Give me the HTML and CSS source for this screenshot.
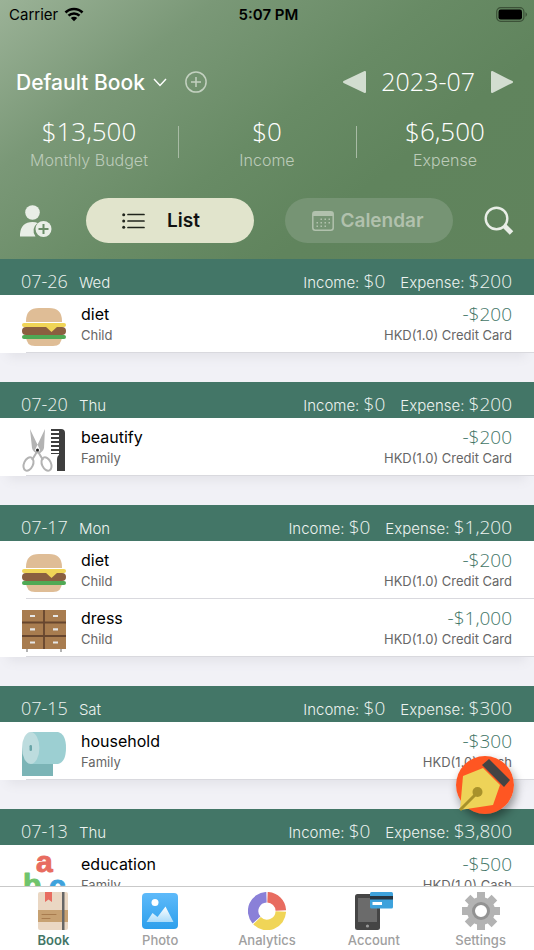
FILE: index.html
```html
<!DOCTYPE html>
<html lang="en">
<head>
  <meta charset="UTF-8">
  <meta name="viewport" content="width=device-width, initial-scale=1.0">
  <title>Default Book</title>
  <link rel="stylesheet" href="styles.css">
</head>
<body>

<!-- SHARED ICONS -->
<svg class="defs" aria-hidden="true">
  <symbol id="burger" viewBox="0 0 44 44">
    <path d="M4 17V16Q4 3 17 3h10q13 0 13 13v1zM4 31h36q0 10-9 10H13q-9 0-9-10z" fill="#dfbd96"/>
    <rect x="0" y="22" width="44" height="8" rx="4" fill="#8a5f40"/>
    <rect x="0" y="18" width="44" height="4" rx="2" fill="#f0d557"/>
    <path d="M23 21h13l-6.500 6z" fill="#f0d557"/>
    <rect x="0" y="30" width="44" height="4" rx="2" fill="#4fa954"/>
  </symbol>
</svg>

<header class="top">
  <div class="status">
    <span class="carrier">Carrier
      <svg width="20" height="15" viewBox="0 0 20 15"><path d="M1.500 5.500a12 12 0 0 1 17 0M4.500 8.700a7.800 7.800 0 0 1 11 0" fill="none" stroke="#000" stroke-width="2.600"/><path d="M6.800 11a4.600 4.600 0 0 1 6.400 0L10 14.300z"/></svg>
    </span>
    <time>5:07 PM</time>
    <svg class="battery" width="32" height="15" viewBox="0 0 32 15"><rect x=".7" y=".7" width="27.200" height="13.600" rx="4" fill="none" stroke="#3c5238" stroke-width="1.200"/><rect x="2.500" y="2.500" width="23.500" height="10" rx="2.200"/><path d="M29.500 5v5q3-2.500 0-5z" fill="#3c5238"/></svg>
  </div>

  <div class="book-bar">
    <button class="book">Default Book
      <svg width="14" height="9" viewBox="0 0 14 9"><path d="M1 1l6 6.500L13 1" fill="none" stroke="#fff" stroke-width="1.400"/></svg>
    </button>
    <button class="add" aria-label="Add book">
      <svg width="22" height="22" viewBox="0 0 22 22"><g fill="none" stroke="#c3d1c0" stroke-width="1.500"><circle cx="11" cy="11" r="10.100"/><path d="M11 6v10M6 11h10"/></g></svg>
    </button>
    <div class="month">
      <button aria-label="Previous month"><svg width="24" height="24" viewBox="0 0 24 24"><path d="M23 2v20L2 12z" fill="#d2ddd0" stroke="#d2ddd0" stroke-width="2" stroke-linejoin="round"/></svg></button>
      <span>2023-07</span>
      <button aria-label="Next month"><svg width="24" height="24" viewBox="0 0 24 24"><path d="M2 2v20l20-10z" fill="#d2ddd0" stroke="#d2ddd0" stroke-width="2" stroke-linejoin="round"/></svg></button>
    </div>
  </div>

  <div class="stats">
    <div class="stat"><b>$13,500</b><span>Monthly Budget</span></div>
    <div class="stat"><b>$0</b><span>Income</span></div>
    <div class="stat"><b>$6,500</b><span>Expense</span></div>
  </div>

  <div class="actions">
    <button aria-label="Add member">
      <svg width="32" height="34" viewBox="0 0 32 34"><g fill="#e9eee7"><circle cx="12.500" cy="8.500" r="7.300"/><path d="M0 32.500V30q1-12 12.500-12 3.500 0 5 1-7 6-2 13.500z"/><circle cx="23.500" cy="25" r="8"/></g><path d="M23.500 20v10M18.500 25h10" stroke="#6b8d68" stroke-width="2"/></svg>
    </button>
    <button class="pill on">
      <svg width="23" height="16" viewBox="0 0 23 16"><path d="M6 1.500h16M6 8h16M6 14.500h16" stroke="#20241c" stroke-width="1.700" stroke-linecap="round"/><g fill="#20241c"><circle cx="1.700" cy="1.700" r="1.500"/><circle cx="1.700" cy="8" r="1.500"/><circle cx="1.700" cy="14.300" r="1.500"/></g></svg>
      List
    </button>
    <button class="pill">
      <svg width="22" height="20" viewBox="0 0 22 20"><rect x=".8" y=".8" width="20.400" height="18.400" rx="2.500" fill="none" stroke="#b1c1ad" stroke-width="1.500"/><path d="M1 1h20v4H1z" fill="#b1c1ad"/><path d="M8.500 8.200h10M4.500 11.700h14M4.500 15.200h10" stroke="#b1c1ad" stroke-width="1.500" stroke-dasharray="1.500 2.500"/></svg>
      Calendar
    </button>
    <button aria-label="Search">
      <svg width="30" height="30" viewBox="0 0 30 30"><circle cx="12.500" cy="12.500" r="10.800" fill="none" stroke="#e9eee7" stroke-width="2.400"/><path d="M20 19.500l7.500 7.500" stroke="#e9eee7" stroke-width="5"/></svg>
    </button>
  </div>
</header>

<main class="list">
  <section class="day">
    <h2><span class="date">07-26</span><span>Wed</span><span class="sum">Income: <b>$0</b></span><span>Expense: <b>$200</b></span></h2>
    <div class="item">
      <svg class="pic"><use href="#burger"/></svg>
      <div class="name">diet<small>Child</small></div>
      <div class="amount">-$200<small>HKD(1.0) Credit Card</small></div>
    </div>
  </section>

  <section class="day">
    <h2><span class="date">07-20</span><span>Thu</span><span class="sum">Income: <b>$0</b></span><span>Expense: <b>$200</b></span></h2>
    <div class="item">
      <svg class="pic" viewBox="0 0 44 44">
        <path d="M8 1l10 21-2 4q-5-2-6-6zM23 1L13 22l3 4q5-2 6-6z" fill="#b3b3b3"/>
        <g fill="none" stroke="#b3b3b3" stroke-width="2"><path d="M16 22l-6 10M15 22l6 10"/><ellipse cx="6.500" cy="36" rx="4.500" ry="7" transform="rotate(25 6.500 36)"/><ellipse cx="24.500" cy="36" rx="4.500" ry="7" transform="rotate(-25 24.500 36)"/></g>
        <circle cx="15.500" cy="22" r="1.500" fill="#222"/>
        <path d="M29 1h10q4 0 4 4v38h-8V32q0-4 2-5v-1h-8z" fill="#3e3e3e"/>
        <path d="M28 4h9M28 8h9M28 12h9M28 16h9M28 20h9M28 24h9" stroke="#fff" stroke-width="2"/>
      </svg>
      <div class="name">beautify<small>Family</small></div>
      <div class="amount">-$200<small>HKD(1.0) Credit Card</small></div>
    </div>
  </section>

  <section class="day">
    <h2><span class="date">07-17</span><span>Mon</span><span class="sum">Income: <b>$0</b></span><span>Expense: <b>$1,200</b></span></h2>
    <div class="item">
      <svg class="pic"><use href="#burger"/></svg>
      <div class="name">diet<small>Child</small></div>
      <div class="amount">-$200<small>HKD(1.0) Credit Card</small></div>
    </div>
    <div class="item">
      <svg class="pic" viewBox="0 0 44 44">
        <path d="M4 39h2v4H4zM38 39h2v4h-2z" fill="#b3b3b3"/>
        <path d="M0 1h44v39H0z" fill="#a87c4f"/>
        <path d="M0 13.500h44M0 27h44M22 1v39" stroke="#67462f" stroke-width="1.800"/>
        <path d="M8 7h5M31 7h5M8 20.300h5M31 20.300h5M8 33.500h5M31 33.500h5" stroke="#e6e6e6" stroke-width="2.200"/>
      </svg>
      <div class="name">dress<small>Child</small></div>
      <div class="amount">-$1,000<small>HKD(1.0) Credit Card</small></div>
    </div>
  </section>

  <section class="day">
    <h2><span class="date">07-15</span><span>Sat</span><span class="sum">Income: <b>$0</b></span><span>Expense: <b>$300</b></span></h2>
    <div class="item">
      <svg class="pic" viewBox="0 0 44 44">
        <path d="M0 16h31v28H0z" fill="#7bb4b6"/>
        <path d="M9 0h27q8 2 8 16t-8 16H9z" fill="#9ccfd2"/>
        <ellipse cx="8.700" cy="16" rx="8.700" ry="16" fill="#bddcde"/>
        <rect x="7.500" y="13" width="2.500" height="6" rx="1.200" fill="#6aa5a8"/>
      </svg>
      <div class="name">household<small>Family</small></div>
      <div class="amount">-$300<small>HKD(1.0) Cash</small></div>
    </div>
  </section>

  <section class="day">
    <h2><span class="date">07-13</span><span>Thu</span><span class="sum">Income: <b>$0</b></span><span>Expense: <b>$3,800</b></span></h2>
    <div class="item">
      <svg class="pic abc" viewBox="0 0 44 44">
        <text x="14" y="17" fill="#e86c60" stroke="#e86c60">a</text>
        <text x="1" y="40" fill="#70c46c" stroke="#70c46c">b</text>
        <text x="27" y="41" fill="#3ea2dc" stroke="#3ea2dc">c</text>
      </svg>
      <div class="name">education<small>Family</small></div>
      <div class="amount">-$500<small>HKD(1.0) Cash</small></div>
    </div>
  </section>
</main>

<button class="fab" aria-label="New record">
  <svg width="58" height="58" viewBox="2 2 58 58">
    <circle cx="31" cy="31" r="29" fill="#ff5622"/>
    <path d="M6 56l3-34 20-8 17 17-7 20z" fill="#eed358"/>
    <path d="M6 56l18-18" stroke="#a8922b" stroke-width="3"/>
    <circle cx="23.500" cy="38" r="5" fill="#a8922b"/>
    <path d="M28 11l7-6 21 21-6 7z" fill="#444"/>
  </svg>
</button>

<nav class="tabs">
  <a href="#book" class="on">
    <svg width="38" height="38" viewBox="0 0 38 38"><rect x="4" width="30" height="38" rx="2" fill="#ead7c3"/><path d="M4 18h30v12H4z" fill="#c7a172"/><path d="M28 0h2.500v38H28z" fill="#666"/><path d="M11 0h7v10l-3.500-2.500L11 10z" fill="#e86c60"/><path d="M8 22.500h14M8 26.500h8" stroke="#a87c4f" stroke-linecap="round"/></svg>
    Book
  </a>
  <a href="#photo">
    <svg width="38" height="38" viewBox="0 0 38 38"><defs><linearGradient id="sky" x2="0" y2="1"><stop stop-color="#5ebafa"/><stop offset="1" stop-color="#2d9fec"/></linearGradient><linearGradient id="hill" x2="0" y2="1"><stop stop-color="#fff"/><stop offset="1" stop-color="#a9dbfa"/></linearGradient></defs><rect x="1" y="1" width="36" height="36" rx="4" fill="url(#sky)"/><circle cx="14" cy="10.500" r="3.500" fill="#fff"/><path d="M5.500 30l6-9 5 4 8-10.500 8 15.500z" fill="url(#hill)"/></svg>
    Photo
  </a>
  <a href="#analytics">
    <svg width="38" height="38" viewBox="0 0 38 38"><g fill="none" stroke-width="10.500"><path d="M19.500 5.200A13.800 13.800 0 0 1 32.800 18.500" stroke="#e86c60"/><path d="M32.800 19.500A13.800 13.800 0 0 1 9 28.600" stroke="#f0d557"/><path d="M8.500 28A13.800 13.800 0 0 1 18.500 5.200" stroke="#8a80d8"/></g></svg>
    Analytics
  </a>
  <a href="#account">
    <svg width="38" height="38" viewBox="0 0 38 38"><rect y="2" width="25" height="36" rx="2.500" fill="#454545"/><path d="M3 6h19v24H3z" fill="#6b6b6b"/><circle cx="12.500" cy="34" r="1.600" fill="#999"/><rect x="15" width="23" height="16.500" rx="1.500" fill="#3ea2dc"/><path d="M15 4h23v3.500H15z" fill="#263440"/><path d="M17.500 10h9.500v3h-9.500z" fill="#fff"/></svg>
    Account
  </a>
  <a href="#settings">
    <svg width="38" height="38" viewBox="0 0 38 38"><g stroke="#b3b3b3" stroke-width="8"><path d="M19 0v38M0 19h38M5.600 5.600l26.800 26.800M32.400 5.600L5.600 32.400"/></g><circle cx="19" cy="19" r="14" fill="#b3b3b3"/><circle cx="19" cy="19" r="7.500" fill="#fff" stroke="#929292" stroke-width="3"/></svg>
    Settings
  </a>
</nav>

</body>
</html>
```
FILE: styles.css
```css
* { margin: 0; padding: 0; box-sizing: border-box; }

body {
  position: relative;
  display: flex;
  flex-direction: column;
  height: 100vh;
  overflow: hidden;
  font-family: Inter, "Liberation Sans", sans-serif;
  background: #f1f1f6;
  color: #000;
}

button {
  border: none;
  background: none;
  font: inherit;
  color: inherit;
  cursor: pointer;
}

svg { display: block; flex: none; }
.defs { position: absolute; width: 0; height: 0; }

/* header */
.top {
  background: linear-gradient(142deg, #9bb297 0%, #7a9877 25%, #688b65 50%, #60845d 70%, #60835c 100%);
  color: #fff;
  padding-bottom: 16px;
}

.status {
  display: grid;
  grid-template-columns: 1fr auto 1fr;
  align-items: center;
  height: 28px;
  padding: 0 6px 0 9px;
  font-size: 15px;
  color: #000;
}
.status time { font-weight: 600; }
.carrier { display: flex; gap: 6px; align-items: center; }
.battery { justify-self: end; }

.book-bar {
  display: flex;
  align-items: center;
  height: 32px;
  margin-top: 38px;
  padding: 0 20px 0 16px;
}
.book {
  display: flex;
  align-items: center;
  gap: 8px;
  font-size: 21px;
  font-weight: 500;
}
.add { margin-left: 18px; }
.month {
  display: flex;
  align-items: center;
  gap: 15px;
  margin-left: auto;
  font: 300 25px/30px "Open Sans", sans-serif;
}
.month span { padding-bottom: 2px; }

.stats {
  display: grid;
  grid-template-columns: 1fr 1fr 1fr;
  margin-top: 20px;
}
.stat {
  display: flex;
  flex-direction: column;
  align-items: center;
  position: relative;
  font-size: 16px;
  font-weight: 300;
  line-height: 32px;
  color: #bccbb9;
}
.stat b {
  font: 300 26px/26px "Open Sans", sans-serif;
  color: #fff;
}
.stat + .stat::before {
  content: "";
  position: absolute;
  left: 0;
  top: 8px;
  width: 1px;
  height: 32px;
  background: #a8bba5;
}

.actions {
  display: grid;
  grid-template-columns: 35px 1fr 1fr 30px;
  gap: 31px;
  align-items: center;
  margin-top: 22px;
  padding: 0 20px;
}
.pill {
  display: flex;
  align-items: center;
  justify-content: center;
  gap: 6px;
  height: 45px;
  padding-right: 2px;
  border-radius: 23px;
  background: #769474;
  color: #b1c1ad;
  font-size: 19px;
  font-weight: 600;
}
.pill.on {
  gap: 22px;
  padding-right: 18px;
  background: #e1e4cc;
  color: #111;
}

/* records */
.list {
  flex: 1;
  min-height: 0;
  overflow: hidden;
}
.day { margin-bottom: 29px; }
.day h2 {
  display: flex;
  align-items: baseline;
  height: 36px;
  padding: 8px 22px 0 21px;
  background: #437667;
  color: #edf3f0;
  font-size: 15px;
  font-weight: 300;
  line-height: 28px;
}
.day h2 b { font: 300 19px/28px "Open Sans", sans-serif; }
.day .date {
  margin-right: 11px;
  font: 300 18px/28px "Open Sans", sans-serif;
}
.day .sum { margin-left: auto; margin-right: 15px; }

.item {
  display: flex;
  height: 58px;
  padding: 8px 22px 0;
  background: linear-gradient(#d9d9de, #d9d9de) 26px 100% / 100% 1px no-repeat #fff;
}
.item:last-child { box-shadow: 0 12px 10px -8px #e2e2e8; }
.pic { width: 44px; height: 48px; }
.abc {
  font: 700 30px "Liberation Sans", sans-serif;
  stroke-width: 1px;
  stroke-linejoin: round;
}
.name {
  margin-left: 15px;
  font-size: 16px;
  line-height: 22px;
}
.amount {
  margin-left: auto;
  text-align: right;
  font: 300 19px/22px "Open Sans", sans-serif;
  color: #437667;
}
.item small {
  display: block;
  font: 400 13px/20px Inter, sans-serif;
  color: #666;
}

.fab {
  position: absolute;
  right: 20px;
  bottom: 136px;
  border-radius: 50%;
  box-shadow: 2px 5px 10px rgba(0, 0, 0, .4);
}
.fab svg { overflow: visible; }

/* bottom tabs */
.tabs {
  display: grid;
  grid-template-columns: repeat(5, 1fr);
  height: 64px;
  padding-top: 5px;
  background: #fff;
  border-top: 1px solid #c9c9c9;
}
.tabs a {
  display: flex;
  flex-direction: column;
  align-items: center;
  font-size: 13px;
  font-weight: 500;
  line-height: 20px;
  color: #a0a0a0;
  text-decoration: none;
}
.tabs .on { color: #437667; font-weight: 600; }
```
